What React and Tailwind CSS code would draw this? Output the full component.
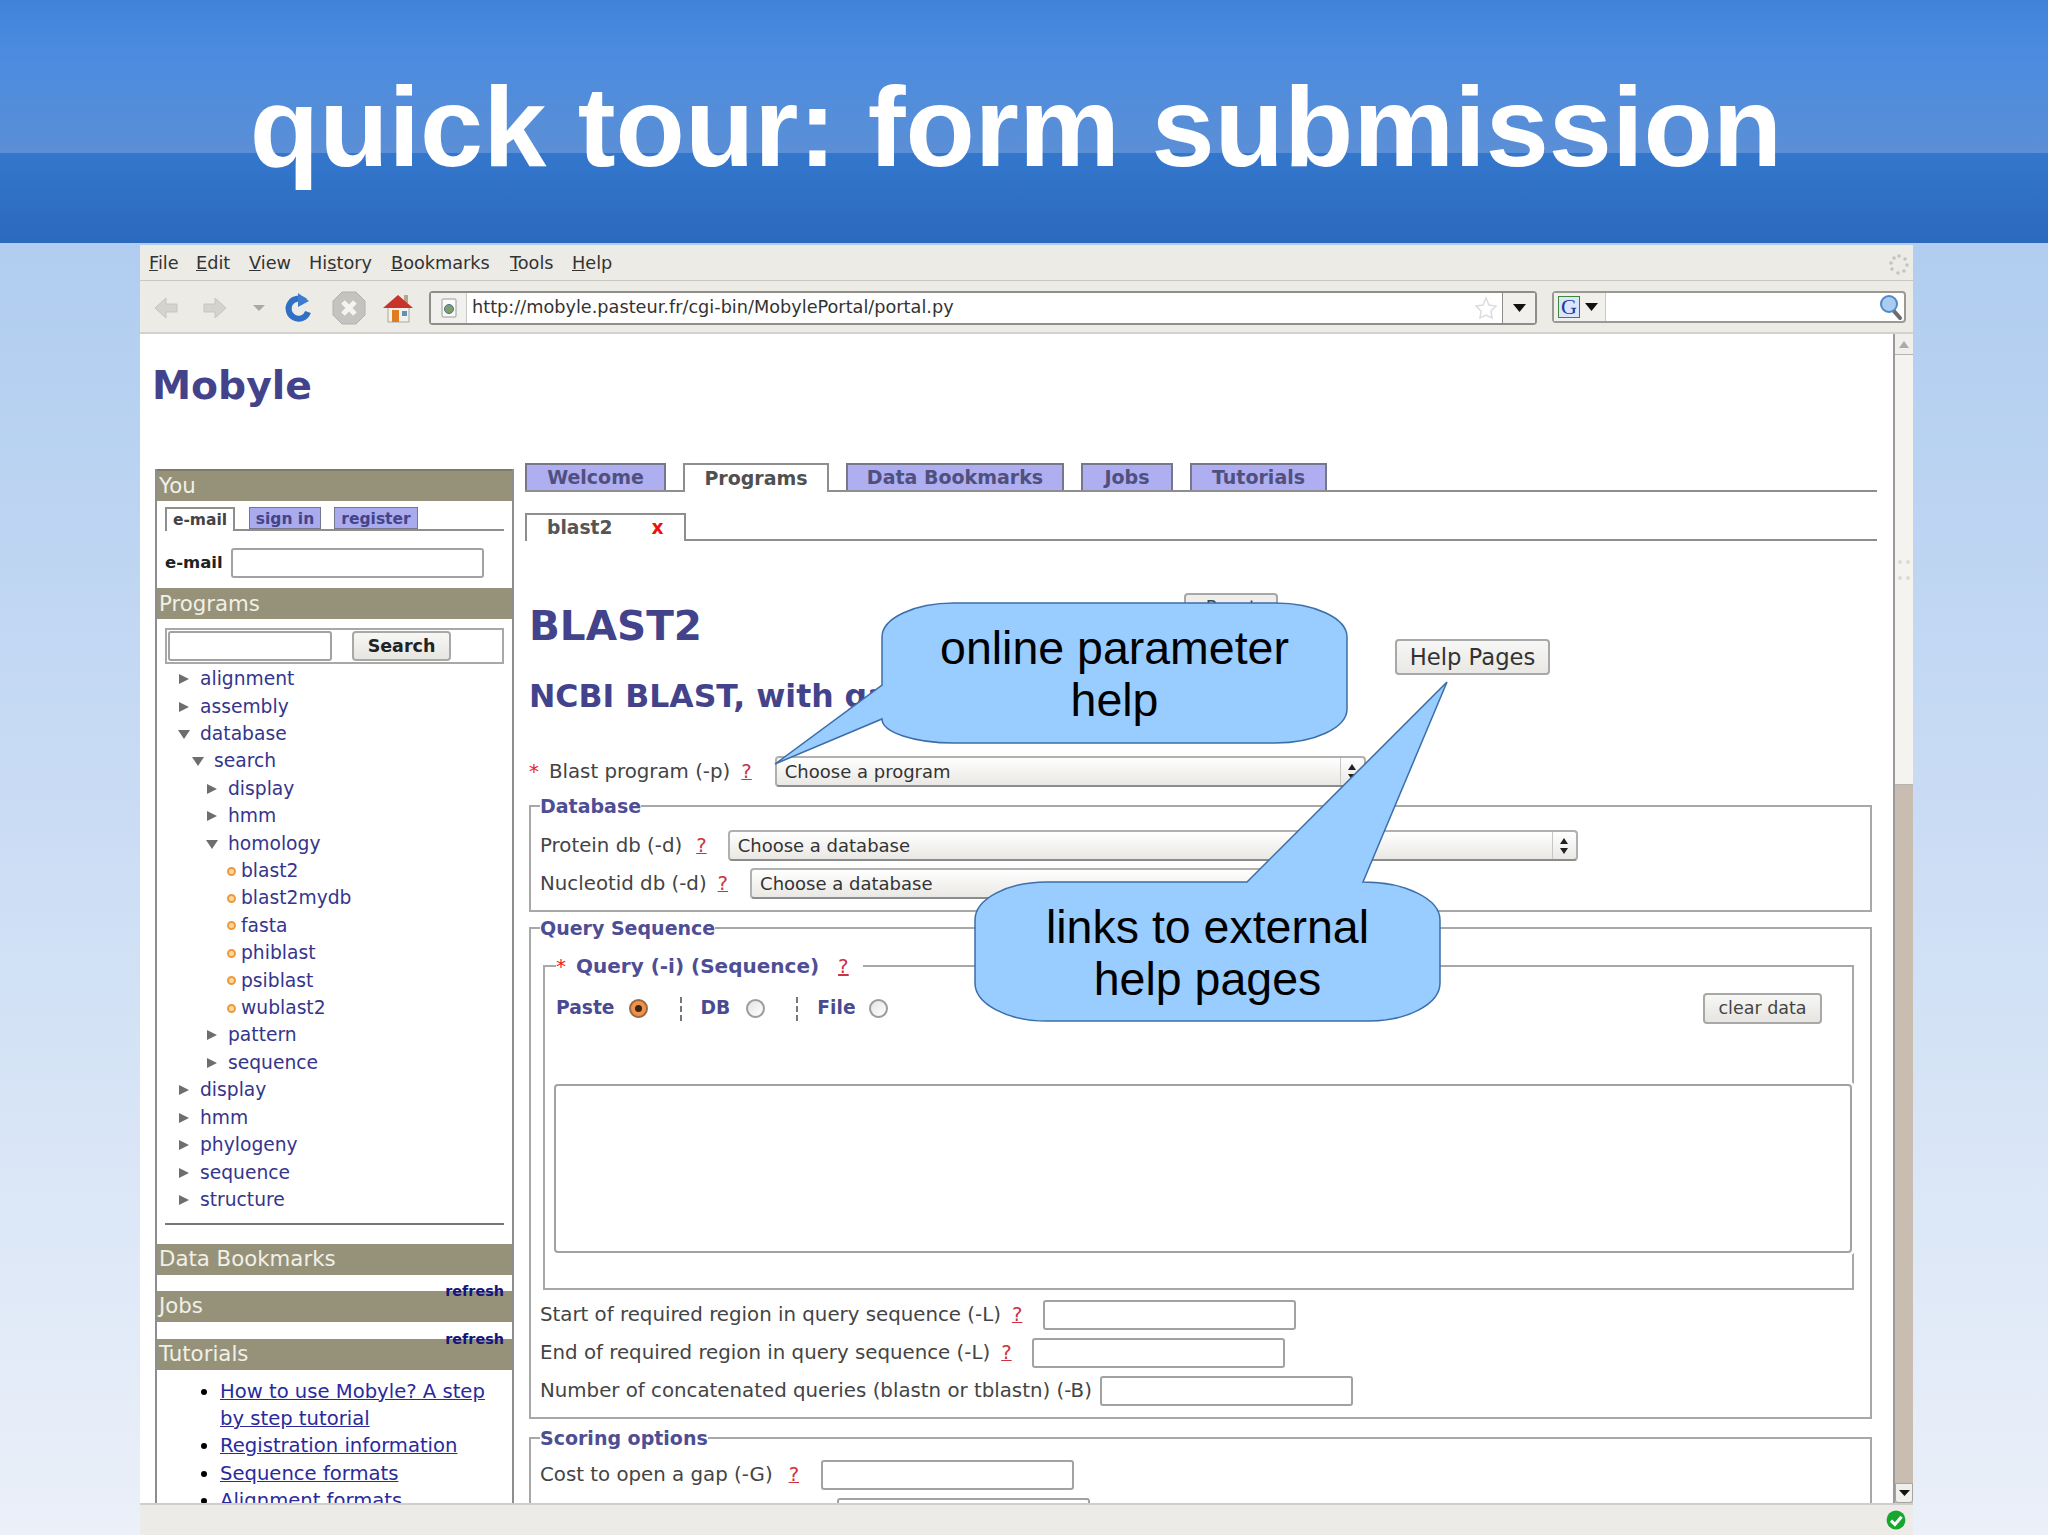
import React from 'react';

const MENU = [
  ['F', 'ile', 'w-[47px]'],
  ['E', 'dit', 'w-[53px]'],
  ['V', 'iew', 'w-[60px]'],
  ['Hi', 'story', 'w-[82px]'],
  ['B', 'ookmarks', 'w-[119px]'],
  ['T', 'ools', 'w-[62px]'],
  ['H', 'elp', 'w-[50px]'],
];

const TABS = [
  { label: 'Welcome', cls: 'w-[141px]' },
  { label: 'Programs', cls: 'w-[146px]', active: true },
  { label: 'Data Bookmarks', cls: 'w-[218px]' },
  { label: 'Jobs', cls: 'w-[92px]' },
  { label: 'Tutorials', cls: 'w-[137px]' },
];

const TREE = [
  ['alignment', 0, 'closed'],
  ['assembly', 0, 'closed'],
  ['database', 0, 'open'],
  ['search', 1, 'open'],
  ['display', 2, 'closed'],
  ['hmm', 2, 'closed'],
  ['homology', 2, 'open'],
  ['blast2', 3, 'leaf'],
  ['blast2mydb', 3, 'leaf'],
  ['fasta', 3, 'leaf'],
  ['phiblast', 3, 'leaf'],
  ['psiblast', 3, 'leaf'],
  ['wublast2', 3, 'leaf'],
  ['pattern', 2, 'closed'],
  ['sequence', 2, 'closed'],
  ['display', 0, 'closed'],
  ['hmm', 0, 'closed'],
  ['phylogeny', 0, 'closed'],
  ['sequence', 0, 'closed'],
  ['structure', 0, 'closed'],
];

const INDENT = ['pl-[21px]', 'pl-[35px]', 'pl-[49px]', 'pl-[70px]'];

function Caret({ open }) {
  return (
    <svg width="12" height="12" viewBox="0 0 12 12" className="shrink-0">
      {open
        ? <polygon points="0,2 12,2 6,11" fill="#6e6e6e" />
        : <polygon points="1,1 11,6 1,11" fill="#6e6e6e" />}
    </svg>
  );
}

function TreeRow({ label, depth, kind }) {
  return (
    <div className={`flex items-center h-[27.42px] ${INDENT[depth]}`}>
      {kind === 'leaf'
        ? <span className="shrink-0 w-[9px] h-[9px] rounded-full bg-[#fbd9a0] border-2 border-[#ee9a3c] mr-[5px]" />
        : <span className="w-[22px] shrink-0"><Caret open={kind === 'open'} /></span>}
      <span className="text-[#35358c]">{label}</span>
    </div>
  );
}

function SideBar({ children, extra }) {
  return (
    <div className={`relative flex items-center h-[31px] pl-[2px] bg-[#96927a] text-[#f1f0e6] text-[21.3px] ${extra || ''}`}>
      {children}
    </div>
  );
}

function Refresh() {
  return <span className="absolute right-[8px] -top-[10px] text-[14.4px] font-bold text-[#14147c]">refresh</span>;
}

function Help({ cls }) {
  return <span className={`text-[#cc3340] underline ${cls || 'ml-[11px]'}`}>?</span>;
}

function Field({ cls, w }) {
  return <input readOnly className={`block h-[30px] ${w || 'w-[253px]'} bg-white border-2 border-[#a2a2a2] rounded-[3px] outline-none ${cls || ''}`} />;
}

function Select({ text, w, arrows }) {
  return (
    <div className={`flex items-center h-[31px] ${w} pl-[8px] border-2 border-[#b0b0b0] border-b-[#8c8c8c] rounded-[4px] bg-gradient-to-b from-[#ffffff] to-[#e9e8e4] text-[#333] text-[18px] shrink-0`}>
      <span>{text}</span>
      {arrows && (
        <span className="ml-auto flex h-full w-[24px] border-l border-[#c6c6c6] items-center justify-center">
          <svg width="10" height="18" viewBox="0 0 10 18">
            <polygon points="5,1 9,7 1,7" fill="#222" />
            <polygon points="5,17 9,11 1,11" fill="#222" />
          </svg>
        </span>
      )}
    </div>
  );
}

function Radio({ on }) {
  return on ? (
    <span className="flex items-center justify-center w-[19px] h-[19px] rounded-full border-2 border-[#9a6b42] bg-[#f0924a]">
      <span className="w-[7px] h-[7px] rounded-full bg-[#3a2414]" />
    </span>
  ) : (
    <span className="block w-[19px] h-[19px] rounded-full border-2 border-[#9c9c9c] bg-gradient-to-br from-[#e4e4e4] to-white" />
  );
}

function Dashed({ cls }) {
  return <span className={`block h-[24px] border-l-2 border-dashed border-[#777] ${cls}`} />;
}

function Legend({ children, cls }) {
  return <legend className={`h-[24px] leading-[24px] font-bold text-[19px] text-[#4e4e94] ${cls || ''}`}>{children}</legend>;
}

function Toolbar() {
  return (
    <div className="flex items-center h-[54px] bg-[#ecebe6] border-t border-[#c9c8c3] border-b-2 border-b-[#d2d1cc] pl-[13px] pt-[2px]">
      {/* back */}
      <svg width="26" height="26" viewBox="0 0 26 26" className="shrink-0">
        <path d="M13 3 L2 13 L13 23 L13 17 L24 17 L24 9 L13 9 Z" fill="#d4d3ce" stroke="#c6c5c0" />
      </svg>
      {/* forward */}
      <svg width="26" height="26" viewBox="0 0 26 26" className="ml-[23px] shrink-0">
        <path d="M13 3 L24 13 L13 23 L13 17 L2 17 L2 9 L13 9 Z" fill="#d4d3ce" stroke="#c6c5c0" />
      </svg>
      <svg width="12" height="8" viewBox="0 0 12 8" className="ml-[25px] shrink-0">
        <polygon points="0,1 12,1 6,7" fill="#aaa9a4" />
      </svg>
      {/* reload */}
      <svg width="30" height="32" viewBox="0 0 30 32" className="ml-[19px] shrink-0">
        <path d="M21 9 A 10 10 0 1 0 24 20" fill="none" stroke="#2f6fc4" strokeWidth="6" />
        <polygon points="14,1 25,9 14,15" fill="#3c7cd0" />
      </svg>
      {/* stop */}
      <svg width="34" height="34" viewBox="0 0 34 34" className="ml-[18px] shrink-0">
        <polygon points="10,1 24,1 33,10 33,24 24,33 10,33 1,24 1,10" fill="#c4c3bf" stroke="#b3b2ae" />
        <path d="M11 11 L23 23 M23 11 L11 23" stroke="#f4f4f2" strokeWidth="5" />
      </svg>
      {/* home */}
      <svg width="32" height="30" viewBox="0 0 32 30" className="ml-[16px] shrink-0">
        <rect x="22" y="2" width="4" height="8" fill="#b9a58a" />
        <rect x="6" y="13" width="21" height="16" fill="#f2f0ea" stroke="#a8a8a0" />
        <polygon points="16,2 31,15 1,15" fill="#c8332b" />
        <rect x="10" y="17" width="7" height="12" fill="#e07b20" />
        <rect x="20" y="18" width="5" height="5" fill="#5f93b5" />
      </svg>
      {/* location bar */}
      <div className="flex items-center h-[34px] w-[1108px] ml-[15px] bg-white border-2 border-[#8e8d88] rounded-[4px] shrink-0">
        <span className="flex items-center justify-center h-full w-[36px] bg-[#f1f0ec] border-r border-[#c8c8c4]">
          <svg width="16" height="20" viewBox="0 0 16 20">
            <rect x="1" y="1" width="14" height="18" rx="1" fill="#fafafa" stroke="#9a9a9a" />
            <circle cx="8" cy="11" r="4.5" fill="#7f9e6a" stroke="#4a6f8e" />
          </svg>
        </span>
        <span className="ml-[5px] mt-[1px] text-[17.7px] text-[#333] leading-none">http://mobyle.pasteur.fr/cgi-bin/MobylePortal/portal.py</span>
        <svg width="24" height="24" viewBox="0 0 24 24" className="ml-auto mr-[4px]">
          <polygon points="12,2 15,9 22,10 17,15 18,22 12,19 6,22 7,15 2,10 9,9" fill="#fff" stroke="#dcdcdc" strokeWidth="1.5" />
        </svg>
        <span className="flex items-center justify-center h-full w-[33px] bg-[#f1f0ec] border-l border-[#8e8d88]">
          <svg width="13" height="8" viewBox="0 0 13 8"><polygon points="0,0 13,0 6.5,8" fill="#111" /></svg>
        </span>
      </div>
      {/* search bar */}
      <div className="flex items-center h-[32px] w-[354px] ml-[15px] -mt-[2px] bg-white border-2 border-[#9a9994] rounded-[4px] shrink-0">
        <span className="flex items-center h-full w-[52px] pl-[4px] bg-[#f1f0ec] border-r border-[#c8c8c4]">
          <span className="flex items-center justify-center w-[22px] h-[22px] border border-t-[#3a8a3a] border-l-[#3a8a3a] border-r-[#d03030] border-b-[#3a8a3a] bg-[#dbe6fa] text-[#2238a8] text-[22px] leading-none [font-family:'Liberation_Serif',serif]">G</span>
          <svg width="13" height="8" viewBox="0 0 13 8" className="ml-[5px]"><polygon points="0,0 13,0 6.5,8" fill="#111" /></svg>
        </span>
        <svg width="24" height="26" viewBox="0 0 24 26" className="ml-auto mr-[1px]">
          <line x1="14" y1="16" x2="21" y2="24" stroke="#6c6c6c" strokeWidth="4" strokeLinecap="round" />
          <circle cx="10" cy="10" r="8" fill="#a8cdf0" stroke="#4f89c6" strokeWidth="2" />
        </svg>
      </div>
    </div>
  );
}

function Sidebar() {
  return (
    <aside className="w-[359px] ml-[15px] mt-[6px] shrink-0 border-x-2 border-[#8e8e8e] text-[18.7px]">
      <SideBar extra="h-[32px] border-t-2 border-[#7d7a66]">You</SideBar>
      <div className="flex items-end h-[22px] mt-[8px] mx-[8px] w-[339px] border-b-2 border-[#8e8e8e] text-[15.5px] font-bold leading-none">
        <span className="flex items-center justify-center w-[70px] border-2 border-b-0 border-[#8e8e8e] text-[#444] bg-white -mb-[2px] h-[24px] pt-[1px]">e-mail</span>
        <span className="flex items-center justify-center w-[72px] h-[22px] ml-[14px] pt-[3px] border border-[#77778c] bg-[#aaaaee] text-[#444488]">sign in</span>
        <span className="flex items-center justify-center w-[84px] h-[22px] ml-[13px] pt-[3px] border border-[#77778c] bg-[#aaaaee] text-[#444488]">register</span>
      </div>
      <div className="flex items-center h-[30px] mt-[17px] ml-[8px]">
        <span className="font-bold text-[16.5px] text-[#222]">e-mail</span>
        <Field w="w-[253px]" cls="ml-auto mr-[28px]" />
      </div>
      <SideBar extra="mt-[10px]">Programs</SideBar>
      <div className="flex items-center h-[36px] w-[339px] mt-[9px] ml-[8px] px-[1px] border-2 border-[#a8a8a8]">
        <Field w="w-[164px]" />
        <span className="flex items-center justify-center ml-[20px] w-[99px] h-[30px] border-2 border-[#a8a8a8] rounded-[4px] bg-gradient-to-b from-[#f7f7f5] to-[#e6e5e1] font-bold text-[17.5px] text-[#222]">Search</span>
      </div>
      <div className="pt-[1.5px]">
        {TREE.map(([label, depth, kind], i) => <TreeRow key={i} label={label} depth={depth} kind={kind} />)}
      </div>
      <div className="mt-[9px] mx-[8px] w-[339px] border-t-2 border-[#777]" />
      <SideBar extra="mt-[19px]">Data Bookmarks</SideBar>
      <SideBar extra="mt-[16px]">Jobs<Refresh /></SideBar>
      <SideBar extra="mt-[17px]">Tutorials<Refresh /></SideBar>
      <ul className="mt-[8px] pl-[63px] pr-[20px] list-disc leading-[27.42px] text-[19.6px] text-[#2a2a9c] underline marker:text-black">
        <li>How to use Mobyle? A step by step tutorial</li>
        <li>Registration information</li>
        <li>Sequence formats</li>
        <li>Alignment formats</li>
      </ul>
    </aside>
  );
}

function MainPanel() {
  return (
    <main className="w-[1352px] ml-[11px] shrink-0 text-[19.8px] text-[#444]">
      {/* tabs */}
      <div className="flex items-end h-[29px] gap-[17px] border-b-2 border-[#8e8e8e] font-bold text-[19px]">
        {TABS.map(t => (
          <div
            key={t.label}
            className={t.active
              ? `flex items-center justify-center h-[29px] -mb-[2px] ${t.cls} bg-white border-2 border-b-0 border-[#8e8e8e] text-[#505050]`
              : `flex items-center justify-center h-[27px] ${t.cls} bg-[#aeaef0] border-2 border-b-0 border-[#77778c] text-[#50507f]`}
          >
            {t.label}
          </div>
        ))}
      </div>
      {/* sub tabs */}
      <div className="flex items-end h-[27px] mt-[22px] border-b-2 border-[#8e8e8e]">
        <div className="flex items-center w-[161px] h-[28px] -mb-[2px] pl-[20px] bg-white border-2 border-b-0 border-[#8e8e8e] text-[#555] text-[18.7px] font-bold">
          <span>blast2</span>
          <span className="ml-[39px] text-[#ee1111] font-bold">x</span>
        </div>
      </div>
      <div className="flex items-start mt-[52px] h-[56px]">
        <h1 className="w-[659px] mt-[10px] pl-[4px] text-[40.5px] leading-[46px] font-bold text-[#43438c]">BLAST2</h1>
        <span className="flex items-center justify-center w-[94px] h-[30px] pb-[3px] border-2 border-[#a8a8a8] rounded-[4px] bg-[#efeeea] text-[18px]">Reset</span>
      </div>
      <h2 className="mt-[27px] h-[40px] pl-[4px] text-[31.5px] leading-[40px] font-bold text-[#43438c]">NCBI BLAST, with gaps</h2>
      <div className="flex items-center h-[31px] mt-[40px] pl-[4px]">
        <span className="text-[#ee2222] mr-[10px]">*</span>
        <span>Blast program (-p)</span>
        <Help />
        <span className="ml-[23px]"><Select text="Choose a program" w="w-[591px]" arrows /></span>
      </div>

      <fieldset className="mt-[7px] ml-[4px] w-[1343px] border-2 border-[#a8a8a8] pl-[9px] pb-[11px]">
        <Legend cls="ml-0">Database</Legend>
        <div className="flex items-center mt-[12px]">
          <span>Protein db (-d)</span>
          <Help cls="ml-[14px]" />
          <span className="ml-[21px]"><Select text="Choose a database" w="w-[850px]" arrows /></span>
        </div>
        <div className="flex items-center mt-[7px]">
          <span>Nucleotid db (-d)</span>
          <Help />
          {/* its right end sits behind the second callout */}
          <span className="ml-[22px]"><Select text="Choose a database" w="w-[550px]" /></span>
        </div>
      </fieldset>

      <fieldset className="mt-[4px] ml-[4px] w-[1343px] border-2 border-[#a8a8a8] pl-[9px] pb-[11px]">
        <Legend>Query Sequence</Legend>
        <fieldset className="mt-[14px] ml-[3px] w-[1311px] border-2 border-[#a8a8a8] pl-[9px] pb-[35px]">
          <Legend cls="ml-[2px] pr-[14px] text-[20px]">
            <span className="text-[#ee2222] font-normal mr-[10px]">*</span>Query (-i) (Sequence)
            <span className="ml-[19px] text-[#cc3340] font-normal underline">?</span>
          </Legend>
          <div className="flex items-center h-[31px] mt-[15px] pl-[2px] font-bold text-[18.7px] text-[#4a4a90]">
            <span>Paste</span>
            <span className="ml-[14px]"><Radio on /></span>
            <Dashed cls="ml-[32px]" />
            <span className="ml-[19px]">DB</span>
            <span className="ml-[16px]"><Radio /></span>
            <Dashed cls="ml-[31px]" />
            <span className="ml-[19px]">File</span>
            <span className="ml-[13px]"><Radio /></span>
            <span className="flex items-center justify-center ml-auto mr-[30px] w-[119px] h-[31px] border-2 border-[#a8a8a8] rounded-[4px] bg-gradient-to-b from-[#f7f7f5] to-[#e6e5e1] font-normal text-[#444] text-[17.5px]">clear data</span>
          </div>
          <textarea readOnly className="block mt-[60px] w-[1298px] h-[169px] bg-white border-2 border-[#a2a2a2] rounded-[4px] outline-none resize-none shadow-[0_0_0_3px_#ffffff]" />
        </fieldset>
        <div className="flex items-center mt-[10px]">
          <span>Start of required region in query sequence (-L)</span>
          <Help />
          <Field cls="ml-[21px]" />
        </div>
        <div className="flex items-center mt-[8px]">
          <span>End of required region in query sequence (-L)</span>
          <Help />
          <Field cls="ml-[20px]" />
        </div>
        <div className="flex items-center mt-[8px]">
          <span>Number of concatenated queries (blastn or tblastn) (-B)</span>
          <Field cls="ml-[8px]" />
        </div>
      </fieldset>

      <fieldset className="mt-[7px] ml-[4px] w-[1343px] border-2 border-[#a8a8a8] pl-[9px] pb-[10px]">
        <Legend>Scoring options</Legend>
        <div className="flex items-center mt-[10px]">
          <span>Cost to open a gap (-G)</span>
          <Help cls="ml-[16px]" />
          <Field cls="ml-[22px]" />
        </div>
        <div className="flex items-center mt-[8px]">
          <span>Cost to extend a gap (-E)</span>
          <Help cls="ml-[16px]" />
          <Field cls="ml-[22px]" />
        </div>
      </fieldset>
    </main>
  );
}

function Scrollbar() {
  return (
    <div className="flex flex-col w-[20px] shrink-0 bg-[#c9bdb1] border-l-2 border-[#9a9a96]">
      <div className="flex items-center justify-center h-[21px] bg-[#f0efeb] border-b border-[#b5b4b0]">
        <svg width="10" height="7" viewBox="0 0 10 7"><polygon points="5,0 10,7 0,7" fill="#aaa" /></svg>
      </div>
      <div className="flex items-center justify-center h-[430px] bg-[#f4f3ef] border-b border-[#b5b4b0]">
        <span className="w-[12px] h-[20px] border-y-4 border-dotted border-[#dcdbd6]" />
      </div>
      <div className="flex-1" />
      <div className="flex items-center justify-center h-[20px] bg-[#f0efeb] border border-[#a5a4a0] rounded-b-[3px]">
        <svg width="11" height="6" viewBox="0 0 11 6"><polygon points="0,0 11,0 5.5,6" fill="#111" /></svg>
      </div>
    </div>
  );
}

function Callouts() {
  return (
    <>
      <svg width="2048" height="1535" viewBox="0 0 2048 1535" className="absolute left-0 top-0 pointer-events-none">
        <path
          d="M954 603 L1275 603 A72 34 0 0 1 1347 637 L1347 709 A72 34 0 0 1 1275 743 L954 743 A72 24 0 0 1 882 719 L775 764 L882 685 L882 637 A72 34 0 0 1 954 603 Z"
          fill="#99ccff" stroke="#3c6ea8" strokeWidth="1.5"
        />
        <path
          d="M1047 882 L1247 882 L1447 682 L1363 882 A77 38 0 0 1 1440 920 L1440 983 A72 38 0 0 1 1368 1021 L1047 1021 A72 38 0 0 1 975 983 L975 920 A72 38 0 0 1 1047 882 Z"
          fill="#99ccff" stroke="#3c6ea8" strokeWidth="1.5"
        />
      </svg>
      <div className="absolute left-[882px] top-[604px] w-[465px] h-[140px] flex items-center justify-center text-center text-[46.5px] leading-[52px] text-black">
        online parameter<br />help
      </div>
      <div className="absolute left-[975px] top-[883px] w-[465px] h-[139px] flex items-center justify-center text-center text-[46.5px] leading-[52px] text-black">
        links to external<br />help pages
      </div>
      <div className="absolute left-[1395px] top-[639px] w-[155px] h-[36px] flex items-center justify-center border-2 border-[#a8a8a8] rounded-[4px] bg-gradient-to-b from-[#f7f7f5] to-[#e9e8e4] text-[22.7px] text-[#333] [font-family:'DejaVu_Sans',sans-serif]">
        Help Pages
      </div>
    </>
  );
}

export default function App() {
  return (
    <div className="relative w-[2048px] h-[1535px] overflow-hidden bg-gradient-to-b from-[#a5c6ee] to-[#ebf0f9] [font-family:'Liberation_Sans',Arial,sans-serif]">
      <header className="flex items-center justify-center h-[243px] pr-[16px] bg-[linear-gradient(to_bottom,#3f83d8_0%,#4a8be0_20%,#5b8fd6_63%,#3377cc_63%,#2b69bd_100%)]">
        <h1 className="text-white font-bold text-[113.5px] leading-none mt-[10px]">quick tour: form submission</h1>
      </header>

      <div className="flex flex-col w-[1773px] h-[1290px] mt-[2px] ml-[140px] bg-white [font-family:'DejaVu_Sans',sans-serif]">
        <div className="flex items-center h-[35px] pl-[9px] pt-[2px] bg-[#ecebe6] text-[17.7px] text-[#333]">
          {MENU.map(([u, rest, w], i) => (
            <span key={i} className={`${w} shrink-0`}>
              {u.length > 1 ? <>H<span>i</span><span className="underline">s</span>tory</> : <><span className="underline">{u}</span>{rest}</>}
            </span>
          ))}
          <svg width="22" height="22" viewBox="0 0 22 22" className="ml-auto mr-[3px]">
            <g fill="#c4c4c0">
              <circle cx="11" cy="3" r="1.8" /><circle cx="17" cy="6" r="1.8" /><circle cx="19" cy="12" r="1.8" />
              <circle cx="16" cy="18" r="1.8" /><circle cx="10" cy="20" r="1.8" /><circle cx="4" cy="16" r="1.8" />
              <circle cx="3" cy="10" r="1.8" /><circle cx="6" cy="5" r="1.8" />
            </g>
          </svg>
        </div>
        <Toolbar />
        <div className="flex flex-1 min-h-0">
          <div className="flex-1 min-w-0 overflow-hidden">
            <div className="h-[129px] pl-[12px] pt-[27px]">
              <div className="text-[39.3px] leading-[50px] font-bold text-[#43438c]">Mobyle</div>
            </div>
            <div className="flex items-start">
              <Sidebar />
              <MainPanel />
            </div>
          </div>
          <Scrollbar />
        </div>
        <div className="flex items-center justify-end h-[32px] pr-[7px] bg-[#ecebe8] border-t-2 border-[#cfcecb]">
          <svg width="20" height="20" viewBox="0 0 18 18">
            <circle cx="9" cy="9" r="8.5" fill="#16a82e" />
            <path d="M4.5 9.5 L8 13 L14 6" fill="none" stroke="#fff" strokeWidth="2.8" />
          </svg>
        </div>
      </div>

      <Callouts />
    </div>
  );
}
